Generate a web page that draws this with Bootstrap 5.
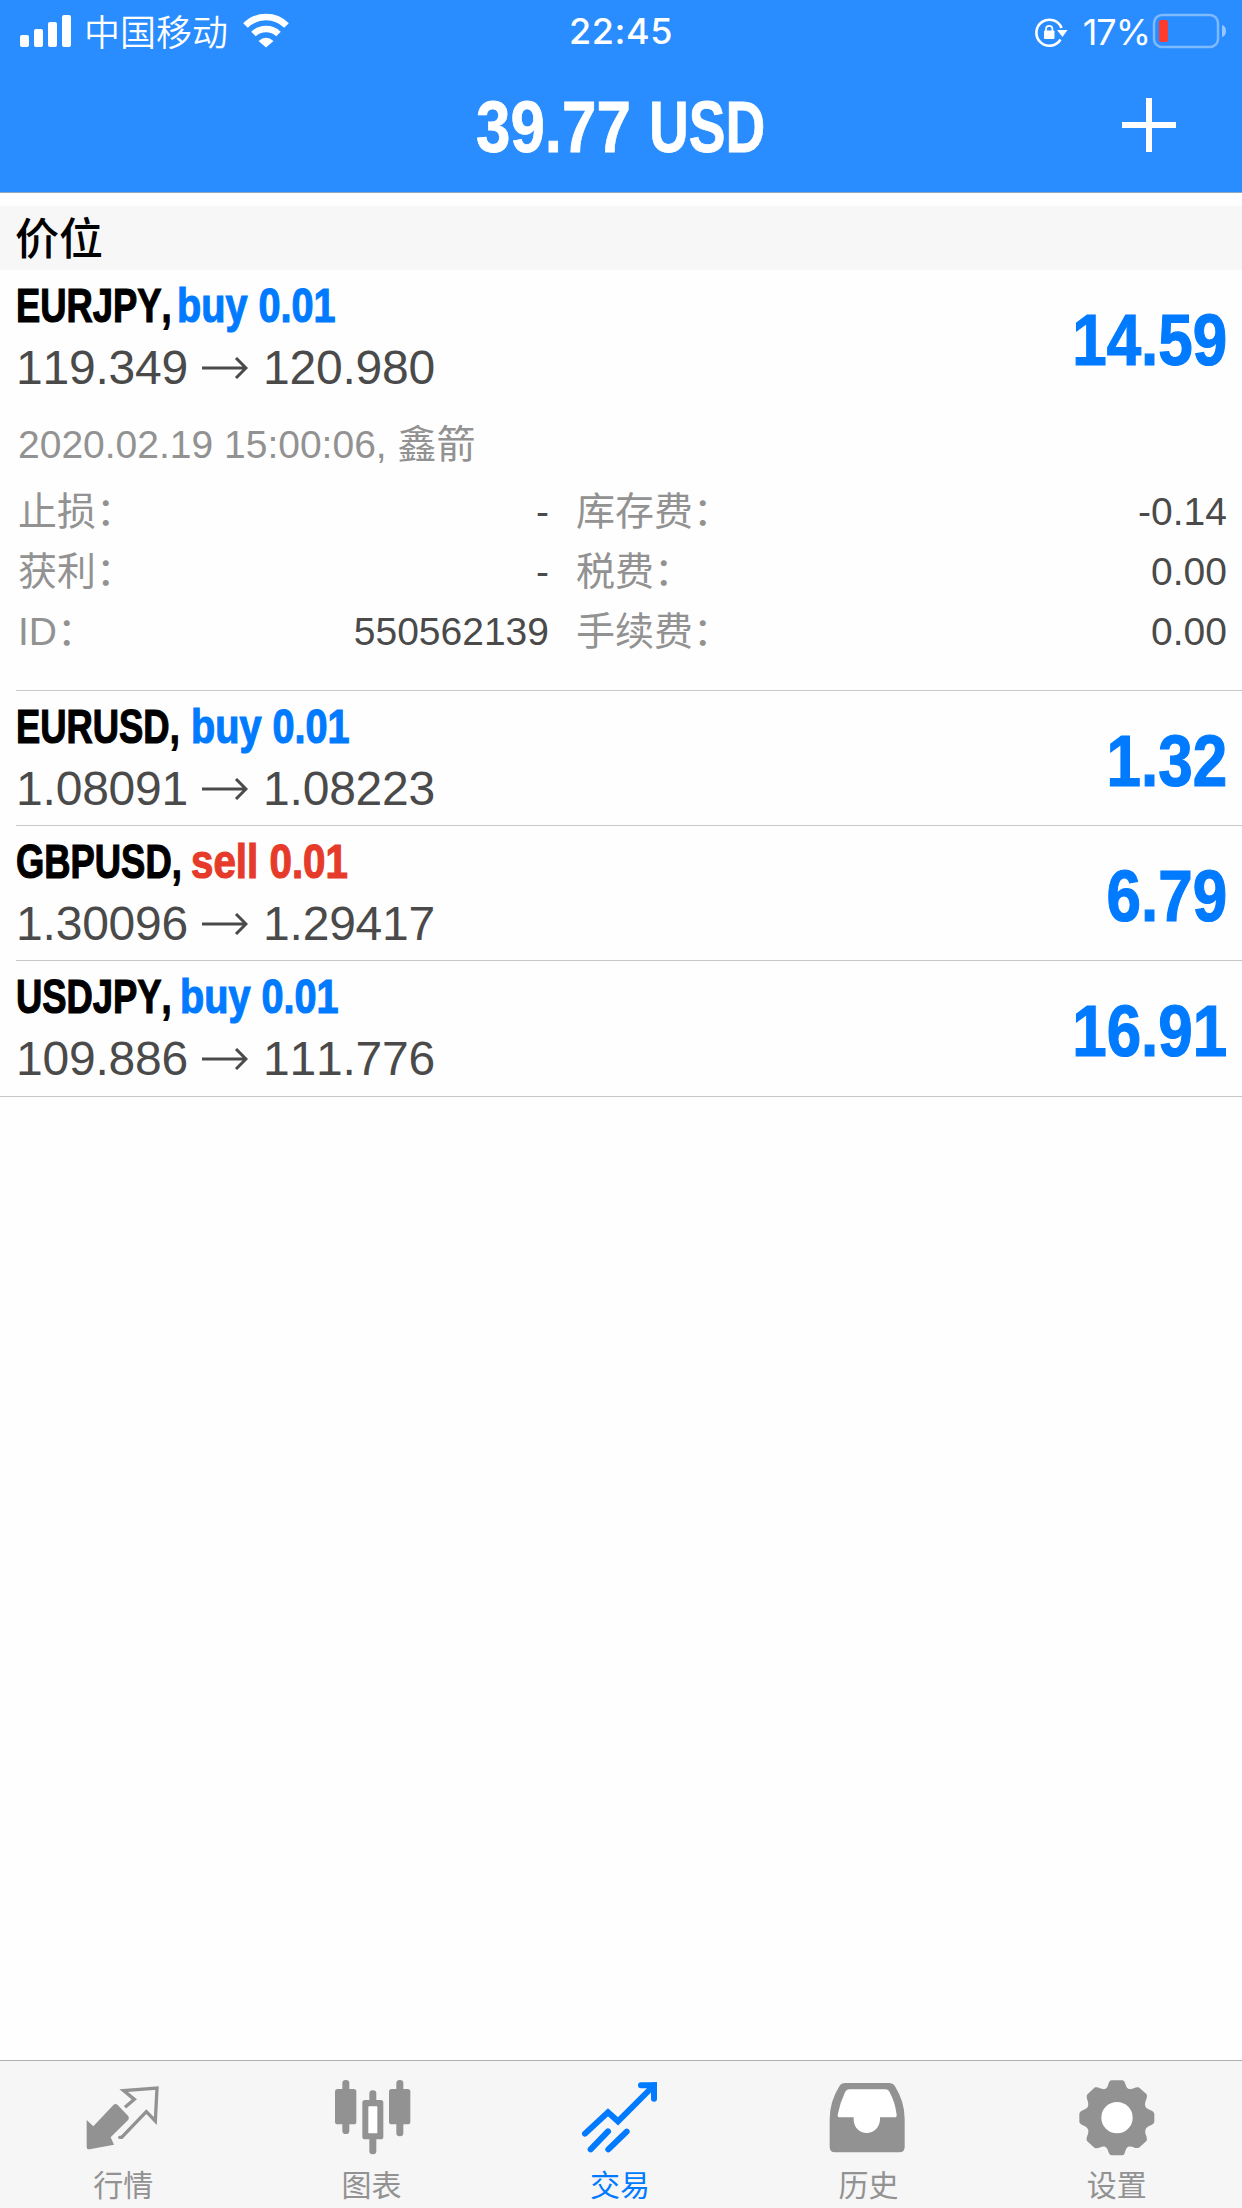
<!DOCTYPE html>
<html lang="zh-CN">
<head>
<meta charset="utf-8">
<meta name="viewport" content="width=device-width, initial-scale=1">
<title>交易</title>
<link href="https://cdn.jsdelivr.net/npm/bootstrap@5.3.0/dist/css/bootstrap.min.css" rel="stylesheet">
<style>
  body { background: #fefefe; color: #4a4a4a; font-family: "Liberation Sans", "Noto Sans CJK SC", sans-serif; font-size: 39px; }
  .screen { height: 2208px; overflow: hidden; }
  .topbar { height: 193px; background: #298cff; border-bottom: 1px solid #8fa6c4; color: #fff; }
  .statusbar { height: 62px; font-family: Inter, "Noto Sans CJK SC", sans-serif; font-size: 36px; line-height: 62px; }
  .statusbar svg, .titlebar svg, .tab svg { display: block; flex: none; }
  .carrier { margin: 2px 15px 0 11px; font-weight: 350; }
  .clock { font-weight: 500; letter-spacing: .6px; }
  .percent { margin: 0 1px 0 15px; letter-spacing: -1px; }
  .titlebar { height: 130px; }
  /* condensed bold face: regular-width bold squeezed horizontally */
  .narrow { font-weight: 700; white-space: nowrap; font-kerning: none; }
  .narrow span, .profit { display: inline-block; transform-origin: 0 50%; }
  .balance { width: 290px; font-size: 72px; line-height: 131px; -webkit-text-stroke: .8px currentColor; }
  .balance .amount { width: 173px; transform: scaleX(.86); }
  .balance .currency { width: 115px; transform: scaleX(.765); }
  .section-head { height: 64px; margin-top: 13px; padding-left: 15px; background: #f7f7f7; color: #000; font: 500 44px/61px "Noto Sans CJK SC", sans-serif; }
  .positions { border-bottom: 1px solid #c8c7cc; }
  .position { margin-left: 16px; padding-right: 15px; }
  .position + .position { border-top: 1px solid #c8c7cc; }
  .summary { height: 134px; }
  .position:last-child .summary { height: 135px; }
  .symbol-line { height: 65px; padding-top: 5px; font-size: 48px; line-height: 61px; color: #000; -webkit-text-stroke: 1.2px currentColor; }
  .symbol-line .symbol { width: 175px; transform: scaleX(.758); }
  .symbol-line .w-eurjpy { width: 161px; }
  .symbol-line .w-usdjpy { width: 164px; }
  .symbol-line .is-buy { transform: scaleX(.825); }
  .symbol-line .is-sell { transform: scaleX(.84); }
  .price-line { height: 66px; font-size: 48px; line-height: 66px; letter-spacing: -.2px; font-kerning: none; }
  .price-line .open-price { width: 170px; }
  .price-line svg { margin: 0 15px 0 16px; }
  .symbol-line .is-buy, .profit { color: #007aff; }
  .symbol-line .is-sell { color: #e63b2b; }
  .profit { font-size: 72px; line-height: 140px; height: 134px; transform-origin: 100% 50%; transform: scaleX(.86); -webkit-text-stroke: 1.2px currentColor; }
  .opened { height: 60px; padding-left: 2px; line-height: 60px; margin-top: 11px; color: #929292; font-kerning: none; }
  .details { padding-left: 2px; margin-top: 7px; height: 208px; }
  .cell-left { width: 531px; margin-right: 27px; }
  .pair { height: 60px; line-height: 60px; }
  .pair dt { font-weight: 400; color: #929292; }
  .pair dd { margin: 0; }
  .tabbar { height: 148px; background: #f6f6f6; border-top: 1px solid #b2b2b2; color: #929292; }
  .tab { padding-top: 16px; font-size: 30px; line-height: 42px; color: inherit; text-decoration: none; }
  .tab span { margin: 8px 2px 0 0; }
  .tab.active { color: #007aff; }
</style>
</head>
<body>
<div class="screen d-flex flex-column">
  <header class="topbar">
    <div class="statusbar row g-0">
      <div class="col d-flex align-items-center">
        <svg class="ms-3" width="57" height="62" viewBox="0 0 57 62" fill="#fff"><rect x="4" y="34" width="9" height="12" rx="2"/><rect x="18" y="28" width="9" height="18" rx="2"/><rect x="32" y="21" width="9" height="25" rx="2"/><rect x="46" y="14" width="9" height="32" rx="2"/></svg>
        <span class="carrier">中国移动</span>
        <svg width="46" height="62" viewBox="243 0 46 62" fill="none" stroke="#fff"><path d="M245.500 24.500A29 29 0 0 1 286.500 24.500" stroke-width="6.500"/><path d="M253.500 33A18 18 0 0 1 278.500 33" stroke-width="6.500"/><path d="M258.500 40Q266 33.500 273.500 40L266 46.500Z" fill="#fff" stroke="none"/></svg>
      </div>
      <div class="col-auto clock">22:45</div>
      <div class="col d-flex align-items-center justify-content-end">
        <svg width="34" height="62" viewBox="1031 0 34 62"><path d="M1057.500 38.500A13 13 0 1 1 1058.500 27" fill="none" stroke="#fff" stroke-width="2.600"/><path d="M1054 29H1064.500L1059.500 36Z" fill="#fff"/><rect x="1041" y="29.500" width="10.500" height="8.500" rx="1" fill="#fff"/><path d="M1043 30V28a3.200 3.200 0 0 1 6.400 0V30" fill="none" stroke="#fff" stroke-width="1.700"/></svg>
        <span class="percent">17%</span>
        <svg class="me-3" width="75" height="62" viewBox="1151 0 75 62"><rect x="1154" y="14" width="64" height="32" rx="8" fill="none" stroke="#fff" stroke-opacity=".4" stroke-width="2.500"/><rect x="1159" y="19" width="9" height="22" rx="2" fill="#ff3b30"/><path d="M1222 24Q1226 25 1226 30T1222 36Z" fill="#fff" fill-opacity=".5"/></svg>
      </div>
    </div>
    <div class="titlebar row g-0">
      <div class="col"></div>
      <div class="col-auto balance narrow d-flex"><span class="amount">39.77</span> <span class="currency">USD</span></div>
      <div class="col d-flex justify-content-end">
        <svg width="120" height="130" viewBox="1122 62 120 130"><path d="M1149 98V152M1122 125H1176" stroke="#fff" stroke-width="6"/></svg>
      </div>
    </div>
  </header>

  <main class="flex-grow-1">
    <div class="section-head">价位</div>
    <div class="positions">
      <article class="position">
        <div class="summary d-flex justify-content-between">
          <div>
            <div class="symbol-line narrow d-flex"><span class="symbol w-eurjpy">EURJPY,</span> <span class="side is-buy">buy 0.01</span></div>
            <div class="price-line d-flex align-items-center"><span class="open-price">119.349</span><svg width="46" height="22" viewBox="0 0 46 22" fill="none" stroke="currentColor" stroke-width="3"><path d="M0 11H44M34 1L44 11L34 21"/></svg><span>120.980</span></div>
          </div>
          <div class="profit narrow">14.59</div>
        </div>
        <div class="opened">2020.02.19 15:00:06, 鑫箭</div>
        <div class="details d-flex">
          <dl class="cell-left mb-0">
            <div class="pair d-flex justify-content-between"><dt>止损：</dt><dd>-</dd></div>
            <div class="pair d-flex justify-content-between"><dt>获利：</dt><dd>-</dd></div>
            <div class="pair d-flex justify-content-between"><dt>ID：</dt><dd>550562139</dd></div>
          </dl>
          <dl class="flex-grow-1 mb-0">
            <div class="pair d-flex justify-content-between"><dt>库存费：</dt><dd>-0.14</dd></div>
            <div class="pair d-flex justify-content-between"><dt>税费：</dt><dd>0.00</dd></div>
            <div class="pair d-flex justify-content-between"><dt>手续费：</dt><dd>0.00</dd></div>
          </dl>
        </div>
      </article>
      <article class="position">
        <div class="summary d-flex justify-content-between">
          <div>
            <div class="symbol-line narrow d-flex"><span class="symbol">EURUSD,</span> <span class="side is-buy">buy 0.01</span></div>
            <div class="price-line d-flex align-items-center"><span class="open-price">1.08091</span><svg width="46" height="22" viewBox="0 0 46 22" fill="none" stroke="currentColor" stroke-width="3"><path d="M0 11H44M34 1L44 11L34 21"/></svg><span>1.08223</span></div>
          </div>
          <div class="profit narrow">1.32</div>
        </div>
      </article>
      <article class="position">
        <div class="summary d-flex justify-content-between">
          <div>
            <div class="symbol-line narrow d-flex"><span class="symbol">GBPUSD,</span> <span class="side is-sell">sell 0.01</span></div>
            <div class="price-line d-flex align-items-center"><span class="open-price">1.30096</span><svg width="46" height="22" viewBox="0 0 46 22" fill="none" stroke="currentColor" stroke-width="3"><path d="M0 11H44M34 1L44 11L34 21"/></svg><span>1.29417</span></div>
          </div>
          <div class="profit narrow">6.79</div>
        </div>
      </article>
      <article class="position">
        <div class="summary d-flex justify-content-between">
          <div>
            <div class="symbol-line narrow d-flex"><span class="symbol w-usdjpy">USDJPY,</span> <span class="side is-buy">buy 0.01</span></div>
            <div class="price-line d-flex align-items-center"><span class="open-price">109.886</span><svg width="46" height="22" viewBox="0 0 46 22" fill="none" stroke="currentColor" stroke-width="3"><path d="M0 11H44M34 1L44 11L34 21"/></svg><span>111.776</span></div>
          </div>
          <div class="profit narrow">16.91</div>
        </div>
      </article>
    </div>
  </main>

  <nav class="tabbar row g-0">
    <a class="tab col d-flex flex-column align-items-center" href="#">
      <svg width="90" height="80" viewBox="118 110 270 240" fill="none" stroke="currentColor" stroke-width="10"><path d="M222 193Q228 189 234 194L265 226Q270 231 266 238L213 291L223 313L150 327Q141 328 141 319V239L161 258Z" fill="currentColor" stroke="none"/><path d="M256 201L284 177L252 151L352 143L347 242L320 214L246 291" stroke-linejoin="miter"/><path d="M246 291H240" stroke-linecap="round"/></svg>
      <span>行情</span>
    </a>
    <a class="tab col d-flex flex-column align-items-center" href="#">
      <svg width="90" height="80" viewBox="863 110 270 240" fill="currentColor"><rect x="906" y="119" width="21" height="162" rx="10"/><rect x="884" y="146" width="64" height="106" rx="8"/><rect x="1068" y="119" width="21" height="169" rx="10"/><rect x="1046" y="146" width="64" height="106" rx="8"/><rect x="987" y="150" width="21" height="192" rx="10"/><rect x="966" y="179" width="63" height="118" rx="8"/><rect x="984" y="198" width="27" height="81" rx="2" fill="#fff"/></svg>
      <span>图表</span>
    </a>
    <a class="tab active col d-flex flex-column align-items-center" href="#" aria-current="page">
      <svg width="90" height="80" viewBox="108 110 270 240" fill="none" stroke="currentColor" stroke-width="18" stroke-linecap="round"><path d="M135 280L204 216L234 243L340 137M303 135H342V175"/><path d="M152 327L204 273M205 327L260 274"/><path d="M334 126H351V143Z" fill="currentColor" stroke="none"/></svg>
      <span>交易</span>
    </a>
    <a class="tab col d-flex flex-column align-items-center" href="#">
      <svg width="90" height="80" viewBox="853 110 270 240"><path d="M917 128H1047Q1060 128 1066 138Q1095 185 1095 235V320Q1095 336 1079 336H886Q870 336 870 320V235Q870 185 899 138Q905 128 917 128Z" fill="currentColor"/><path d="M928 147H1037Q1046 147 1050 156Q1066 185 1071 223Q1072 231 1064 231H1021V240C1018 264 1002 278 981 278C960 278 944 264 942 240V231H901Q893 231 894 223Q900 190 916 156Q920 147 928 147Z" fill="#fff"/></svg>
      <span>历史</span>
    </a>
    <a class="tab col d-flex flex-column align-items-center" href="#">
      <svg width="90" height="80" viewBox="218 110 270 240"><path d="M332 120H367C378 124 373 142 386 146C398 149 406 137 417 142L439 162C443 175 431 184 435 198C440 211 458 207 462 220V245C458 257 441 254 436 267C431 281 443 290 439 301L416 322C404 327 396 315 384 319C373 323 377 341 367 345H333C322 341 325 323 314 319C303 315 295 327 283 323L260 302C255 290 268 281 263 267C258 254 241 257 237 245V220C241 207 258 211 263 198C267 184 256 175 260 163L282 142C294 137 302 149 314 146C326 142 322 124 332 120Z" fill="currentColor"/><circle cx="350" cy="232" r="47" fill="#fff"/></svg>
      <span>设置</span>
    </a>
  </nav>
</div>
<script src="https://cdn.jsdelivr.net/npm/bootstrap@5.3.0/dist/js/bootstrap.bundle.min.js"></script>
</body>
</html>
